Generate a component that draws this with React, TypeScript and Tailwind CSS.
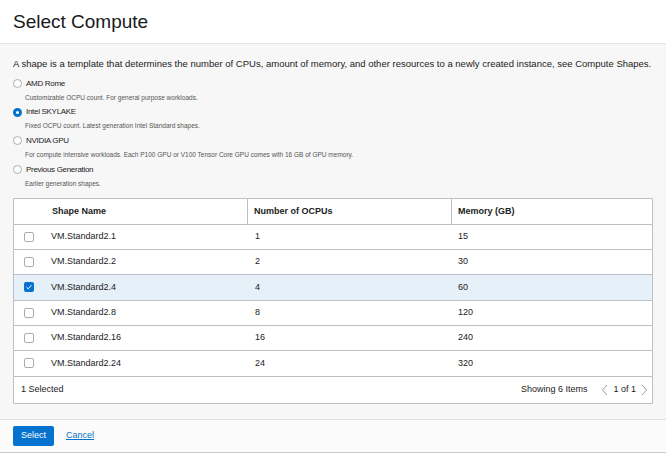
import React from "react";

const options = [
  { label: "AMD Rome", desc: "Customizable OCPU count. For general purpose workloads.", checked: false },
  { label: "Intel SKYLAKE", desc: "Fixed OCPU count. Latest generation Intel Standard shapes.", checked: true },
  { label: "NVIDIA GPU", desc: "For compute intensive workloads. Each P100 GPU or V100 Tensor Core GPU comes with 16 GB of GPU memory.", checked: false },
  { label: "Previous Generation", desc: "Earlier generation shapes.", checked: false },
];

const rows = [
  { name: "VM.Standard2.1", ocpu: "1", mem: "15", sel: false },
  { name: "VM.Standard2.2", ocpu: "2", mem: "30", sel: false },
  { name: "VM.Standard2.4", ocpu: "4", mem: "60", sel: true },
  { name: "VM.Standard2.8", ocpu: "8", mem: "120", sel: false },
  { name: "VM.Standard2.16", ocpu: "16", mem: "240", sel: false },
  { name: "VM.Standard2.24", ocpu: "24", mem: "320", sel: false },
];

function Radio({ checked }: { checked: boolean }) {
  return checked ? (
    <span className="w-[9px] h-[9px] rounded-full bg-[#0572ce] flex items-center justify-center shrink-0">
      <span className="w-[3px] h-[3px] rounded-full bg-white" />
    </span>
  ) : (
    <span className="w-[9px] h-[9px] rounded-full border border-[#a9adb3] bg-white shrink-0" />
  );
}

function Check({ checked }: { checked: boolean }) {
  return checked ? (
    <span className="w-[10px] h-[10px] rounded-[2px] bg-[#0572ce] flex items-center justify-center">
      <svg width="8" height="8" viewBox="0 0 8 8" fill="none">
        <path d="M1.5 4.2 L3.2 5.8 L6.5 2.2" stroke="white" strokeWidth="1" />
      </svg>
    </span>
  ) : (
    <span className="w-[10px] h-[10px] rounded-[2px] border border-[#a9adb3] bg-white" />
  );
}

export default function App() {
  return (
    <div className="w-[666px] h-[455px] bg-white text-[#161513] overflow-hidden" style={{ fontFamily: '"Liberation Sans", Arial, sans-serif' }}>
      <div className="h-[44px] flex items-center px-[13px] border-b border-[#e4e4e4]">
        <h1 className="text-[19px] leading-none text-[#1a1a1a]">Select Compute</h1>
      </div>
      <div className="bg-[#f7f7f7] h-[375px] px-[13px] pt-[14px]">
        <p className="text-[9.5px] leading-[12px] text-[#222] whitespace-nowrap">
          A shape is a template that determines the number of CPUs, amount of memory, and other resources to a newly created instance, see Compute Shapes.
        </p>
        <div className="mt-[6px] flex flex-col">
          {options.map((o) => (
            <div key={o.label} className="h-[28.7px] flex flex-col">
              <div className="h-[15px] flex items-center gap-[4px]">
                <Radio checked={o.checked} />
                <span className="text-[8px] text-[#222] tracking-[-0.3px]">{o.label}</span>
              </div>
              <div className="h-[13px] flex items-center pl-[12px]">
                <span className="text-[6.5px] text-[#555]">{o.desc}</span>
              </div>
            </div>
          ))}
        </div>
        <div className="mt-[7px] border border-[#bcc0c6] bg-white rounded-[1px] text-[9px] text-[#222]">
          <div className="h-[26px] flex items-center font-bold border-b border-[#bcc0c6]">
            <div className="w-[234px] h-full flex items-center pl-[38px] border-r border-[#bcc0c6]">Shape Name</div>
            <div className="w-[204px] h-full flex items-center pl-[6px] border-r border-[#bcc0c6]">Number of OCPUs</div>
            <div className="flex-1 h-full flex items-center pl-[6px]">Memory (GB)</div>
          </div>
          {rows.map((r) => (
            <div key={r.name} className={`h-[25.3px] flex items-center border-b border-[#bcc0c6] ${r.sel ? "bg-[#e6f0f9]" : ""}`}>
              <div className="w-[234px] flex items-center">
                <div className="w-[37px] flex pl-[10px]">
                  <Check checked={r.sel} />
                </div>
                <span>{r.name}</span>
              </div>
              <div className="w-[204px] pl-[7px]">{r.ocpu}</div>
              <div className="flex-1 pl-[6px]">{r.mem}</div>
            </div>
          ))}
          <div className="h-[26px] flex items-center pl-[7px] pr-[4px]">
            <span>1 Selected</span>
            <span className="ml-auto">Showing 6 Items</span>
            <div className="flex items-center ml-[14px] gap-[4px]">
              <svg width="8" height="12" viewBox="0 0 8 12" fill="none">
                <path d="M6 1 L1.5 6 L6 11" stroke="#9a9ea4" strokeWidth="1" />
              </svg>
              <span className="text-[#1a1a1a]">1 of 1</span>
              <svg width="8" height="12" viewBox="0 0 8 12" fill="none">
                <path d="M2 1 L6.5 6 L2 11" stroke="#9a9ea4" strokeWidth="1" />
              </svg>
            </div>
          </div>
        </div>
      </div>
      <div className="h-[34px] bg-[#fbfbfb] border-t border-[#e0e0e0] border-b border-b-[#c8c8c8] flex items-center px-[13px] gap-[12px]">
        <button className="h-[20px] w-[41px] bg-[#0572ce] text-white text-[9px] rounded-[2px]">Select</button>
        <a className="text-[9px] text-[#0572ce] underline">Cancel</a>
      </div>
    </div>
  );
}
